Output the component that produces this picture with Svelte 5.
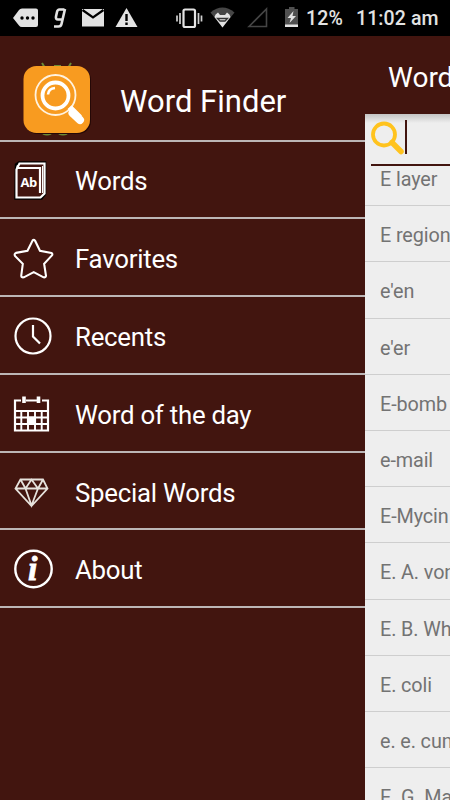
<script>
  const menu = [
    { icon: 'book', label: 'Words' },
    { icon: 'star', label: 'Favorites' },
    { icon: 'clock', label: 'Recents' },
    { icon: 'calendar', label: 'Word of the day' },
    { icon: 'diamond', label: 'Special Words' },
    { icon: 'info', label: 'About' }
  ]

  const words = [
    'E layer',
    'E region',
    "e'en",
    "e'er",
    'E-bomb',
    'e-mail',
    'E-Mycin',
    'E. A. von Willebrand',
    'E. B. White',
    'E. coli',
    'e. e. cummings',
    'E. G. Marshall'
  ]
</script>

<div class="screen">
  <div class="status">
    <svg class="status__icons" width="306" height="36" viewBox="0 0 306 36">
      <!-- message -->
      <path d="M13 18 L19 10 Q20 8.500 22 8.500 H36 Q38 8.500 38 10.500 V25 Q38 27 36 27 H22 Q20 27 19 25.500Z" fill="#e3e3e3" />
      <g fill="#000">
        <circle cx="22" cy="18" r="1.700" />
        <circle cx="27.500" cy="18" r="1.700" />
        <circle cx="33" cy="18" r="1.700" />
      </g>
      <!-- g -->
      <path d="M65 9 L61.500 24 Q61 26.500 58.500 26.500 H54 M64.500 9.500 H59.500 Q57.500 9.500 57 12 L56 16.500 Q55.500 19.500 58 19.500 H62" fill="none" stroke="#e3e3e3" stroke-width="2.600" />
      <!-- mail -->
      <path d="M82 9 H104 V26.500 H82Z" fill="#e3e3e3" />
      <path d="M82.500 10 L93 17.500 L103.500 10" fill="none" stroke="#000" stroke-width="2.200" />
      <!-- warning -->
      <path d="M126.500 8 L137.500 27 H115.500Z" fill="#e3e3e3" />
      <path d="M126.500 14 V21 M126.500 22.500 V25" stroke="#000" stroke-width="2.400" />
      <!-- vibrate -->
      <rect x="183.500" y="9.500" width="11.500" height="17.500" rx="1.500" fill="none" stroke="#e3e3e3" stroke-width="2.200" />
      <path d="M177 15.500 V21.500 M180 13 V24 M198.500 13 V24 M201.500 15.500 V21.500" stroke="#d0d0d0" stroke-width="1.700" />
      <!-- wifi -->
      <path d="M210.500 12.500 Q222.500 2.500 234.500 12.500 L222.500 27.500Z" fill="#464646" />
      <path d="M214.500 17 Q215 14 218 12.500 L220 15 H225 L227 12.500 Q230 14 230.500 17 L222.500 27.500Z" fill="#e3e3e3" />
      <path d="M217.500 18.500 H227.500 L225 21 H220Z" fill="none" stroke="#333" stroke-width="1.300" />
      <!-- signal -->
      <path d="M249 26.500 L266.500 9 V26.500Z" fill="none" stroke="#454545" stroke-width="1.600" />
      <!-- battery -->
      <path d="M285 9 H289 V7 H294.500 V9 H298 V27 H285Z" fill="#505050" />
      <path d="M285 24.500 H298 V27 H285Z M293.500 11 L287.500 18 H291 L289.500 23 L296 16 H292.500Z" fill="#e3e3e3" />
    </svg>
    <span class="status__battery">12%</span>
    <span class="status__time">11:02 am</span>
  </div>

  <div class="body">
    <nav class="drawer">
      <header class="drawer__head">
        <svg class="logo" width="75" height="80" viewBox="0 0 75 80">
          <g fill="none" stroke="#6b8a35" stroke-width="2">
            <path d="M22 3 L25 8 M51 3 L48 8 M34 6 H41" />
            <path d="M23 73.500 Q27 75.500 31 73.500 M39 73.500 Q43 75.500 47 73.500" />
          </g>
          <rect x="4.500" y="7" width="66.500" height="67" rx="13" fill="#250806" />
          <rect x="3.500" y="6" width="66.500" height="67" rx="13" fill="#f89b20" />
          <circle cx="35.500" cy="35" r="20" fill="none" stroke="#fff2df" stroke-width="1.800" />
          <circle cx="35.500" cy="35.500" r="13" fill="none" stroke="#fff" stroke-width="3.800" />
          <path d="M28 34.500 Q28.500 28.500 35 28" fill="none" stroke="#fff" stroke-width="2.600" />
          <path d="M49 50.500 L51.500 48 L54 50.500 L60.500 57" fill="none" stroke="#fff" stroke-width="4" />
          <path d="M52.500 53 L60 60" stroke="#fff" stroke-width="8" stroke-linecap="round" />
        </svg>
        <h1>Word Finder</h1>
      </header>

      {#each menu as item}
        <div class="item">
          <svg class="item__icon" width="44" height="44" viewBox="0 0 44 44" fill="none" stroke="#fff" stroke-width="2.200">
            {#if item.icon === 'book'}
              <path d="M8 6.500 L11 4.500 H37 V36 L33.500 40.500 H7.500Z" stroke="#000" stroke-width="2.500" />
              <path d="M8.500 11.500 L11.500 5.500 H36.500 V35.500 L32.500 39.500 H8.500Z M9 10 H32 V35 M10 7.500 L9 10" />
              <path d="M34.500 8 V35" stroke-width="1" />
              <text class="ab" x="12.500" y="28.500">Ab</text>
            {:else if item.icon === 'star'}
              <path
                d="M24.500 4.500 Q25.600 3.500 26.800 4.800 L31.500 14.500 L42.500 16.500 Q44 17.500 43 19 L35.500 27 L37.300 38.500 Q37 40.500 35 40 L25.500 35 L16 40 Q13.500 40.500 13.500 38.500 L15 27 L7.500 19.500 Q6.500 17.500 8.500 16.500 L19.500 14.500Z"
                stroke-width="2"
                transform="translate(-.8 -.3) scale(1.04)"
              />
            {:else if item.icon === 'clock'}
              <circle cx="25" cy="22" r="17.500" />
              <path d="M25 11 V22.500 L32 29.500" />
            {:else if item.icon === 'calendar'}
              <path d="M13 8.500 H7 V38.500 H40 V8.500 H34 M18 8.500 H29" />
              <path d="M7 19 H40 M7 25.500 H40 M7 32 H40 M13.300 19 V38 M20 19 V38 M27 19 V38 M33.700 19 V38" stroke-width="1.900" />
              <path d="M16 4.500 V11 M30.500 4.500 V11" stroke-width="3.600" />
              <path d="M20 25.500 H27 V32 H20Z" fill="#fff" />
            {:else if item.icon === 'diamond'}
              <path d="M12.500 9.500 H35 L39.500 18.500 L23.500 36 L7.500 18.500Z M7.500 18.500 H39.500 M12.500 9.500 L17.500 18.500 L23.500 9.500 L30 18.500 L35 9.500 M17.500 18.500 L23.500 35.500 L30 18.500" stroke="#e6e2dc" stroke-width="1.800" />
            {:else}
              <circle cx="25.500" cy="22" r="18.200" stroke-width="2.400" />
              <text class="i" x="20" y="33">i</text>
            {/if}
          </svg>
          <span class="item__label">{item.label}</span>
        </div>
      {/each}
    </nav>

    <main class="page">
      <div class="bar">Word Finder</div>
      <div class="search">
        <div class="search__field">
          <svg width="34" height="36" viewBox="0 0 34 36">
            <circle cx="13" cy="14.500" r="11" fill="none" stroke="#ffc31e" stroke-width="3.800" />
            <path d="M21 22.500 L30 31.500" stroke="#ffc31e" stroke-width="5.500" stroke-linecap="round" />
          </svg>
          <span class="search__caret"></span>
        </div>
      </div>
      <div class="list">
        {#each words as word}
          <div class="word">{word}</div>
        {/each}
      </div>
    </main>
  </div>
</div>

<style>
  :global(body) {
    background: #42150f;
  }
  .screen {
    display: flex;
    flex-direction: column;
    width: 450px;
    height: 800px;
    overflow: hidden;
    background: #42150f;
    font-family: Roboto, sans-serif;
  }

  .status {
    display: flex;
    align-items: center;
    flex: 0 0 36px;
    background: #000;
    color: #e3e3e3;
    font-size: 19.5px;
    font-weight: 500;
    white-space: nowrap;
  }
  .status__battery {
    width: 50px;
    padding-top: 1px;
    letter-spacing: .2px;
  }
  .status__time {
    padding-top: 1px;
    letter-spacing: .1px;
  }
  .status__icons {
    flex: none;
  }

  .body {
    display: flex;
    flex: 1;
    min-height: 0;
  }

  .drawer {
    flex: 0 0 365px;
    color: #fff;
  }
  .drawer__head {
    display: flex;
    box-sizing: border-box;
    height: 105.5px;
    padding: 24px 0 0 20px;
    border-bottom: 2px solid #bcb6b6;
  }
  .logo {
    flex: none;
  }
  h1 {
    margin: 23px 0 0 25px;
    font-size: 31px;
    font-weight: 400;
    line-height: 38px;
    white-space: nowrap;
  }
  .item {
    display: flex;
    align-items: center;
    box-sizing: border-box;
    height: 77.8px;
    padding-left: 8px;
    border-bottom: 2px solid #bcb6b6;
  }
  .item__icon {
    flex: none;
    margin-top: 2px;
    overflow: visible;
  }
  .item__label {
    margin-left: 23px;
    padding-top: 4px;
    font-size: 25.8px;
    letter-spacing: -.25px;
    white-space: nowrap;
  }
  .ab {
    fill: #fff;
    stroke: none;
    font: 700 13px 'Open Sans', sans-serif;
    letter-spacing: -.5px;
  }
  .i {
    fill: #fff;
    stroke: #fff;
    stroke-width: .8px;
    font: italic 700 34px 'Liberation Serif', serif;
  }

  .page {
    display: flex;
    flex-direction: column;
    flex: 1;
    min-width: 0;
    overflow: hidden;
    background: #eee;
  }
  .bar {
    flex: none;
    height: 78px;
    padding-left: 23px;
    background: #42150f;
    color: #fff;
    font-size: 28px;
    line-height: 84px;
    white-space: nowrap;
  }
  .search {
    flex: none;
    box-sizing: border-box;
    height: 57px;
    padding-left: 6px;
    background: linear-gradient(#c4c4c4, #eee 9px);
  }
  .search__field {
    display: flex;
    box-sizing: border-box;
    height: 52px;
    padding-top: 6px;
    border-bottom: 2px solid #42150f;
  }
  .search__caret {
    width: 2px;
    height: 34px;
    background: #42150f;
  }
  .list {
    flex: 1;
    min-height: 0;
    overflow: hidden;
  }
  .word {
    box-sizing: border-box;
    height: 56.2px;
    padding-left: 15px;
    border-bottom: 1px solid #cecece;
    color: #737373;
    font-size: 19.8px;
    letter-spacing: -.1px;
    line-height: 60px;
    white-space: nowrap;
  }
  .word:first-child {
    margin-top: -21px;
  }
</style>
